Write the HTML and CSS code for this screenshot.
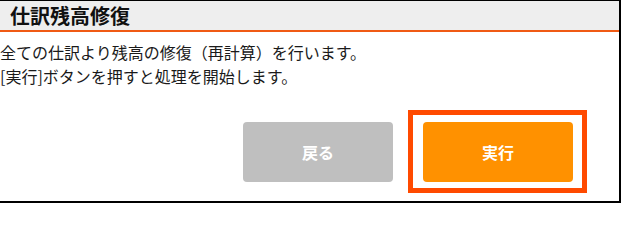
FILE: index.html
```html
<!DOCTYPE html>
<html lang="ja">
<head>
<meta charset="utf-8">
<title>仕訳残高修復</title>
<link rel="stylesheet" href="styles.css">
</head>
<body>
<div class="dialog">
  <div class="dialog-header">
    <h1 class="dialog-title">仕訳残高修復</h1>
  </div>
  <div class="dialog-body">
    <p class="message">全ての仕訳より残高の修復（再計算）を行います。<br>[実行]ボタンを押すと処理を開始します。</p>
    <div class="actions">
      <button class="btn btn-back" type="button">戻る</button>
      <div class="focus-frame">
        <button class="btn btn-run" type="button">実行</button>
      </div>
    </div>
  </div>
</div>
</body>
</html>
```

FILE: styles.css
```css
html, body {
  margin: 0;
  padding: 0;
  background: #ffffff;
}

body {
  font-family: "Noto Sans CJK JP", "Noto Sans", sans-serif;
  color: #111111;
  overflow: hidden;
}

.dialog {
  box-sizing: border-box;
  width: 621px;
  height: 203px;
  border-top: 1px solid #000000;
  border-right: 2px solid #000000;
  border-bottom: 2px solid #000000;
  background: #ffffff;
}

.dialog-header {
  height: 29px;
  background: #eeeeee;
  border-bottom: 2px solid #f05a14;
  padding-left: 10px;
}

.dialog-title {
  margin: 0;
  font-size: 20px;
  font-weight: 700;
  line-height: 29px;
  color: #111111;
}

.dialog-body {
  padding-top: 8px;
}

.message {
  margin: 0;
  font-size: 16px;
  line-height: 24px;
  color: #1a1a1a;
}

.actions {
  display: flex;
  justify-content: flex-end;
  align-items: flex-start;
  gap: 15px;
  margin-top: 22px;
  padding-right: 32px;
}

.btn {
  width: 150px;
  height: 60px;
  border: none;
  border-radius: 4px;
  font-family: "Noto Sans CJK JP", "Noto Sans", sans-serif;
  font-size: 16px;
  font-weight: 700;
  color: #ffffff;
  padding: 0;
  cursor: pointer;
}

.btn-back {
  margin-top: 12px;
  background: #bfbfbf;
}

.focus-frame {
  border: 5px solid #ff4a00;
  padding: 7px 9px 6px 10px;
}

.btn-run {
  display: block;
  background: #ff9100;
}
```
